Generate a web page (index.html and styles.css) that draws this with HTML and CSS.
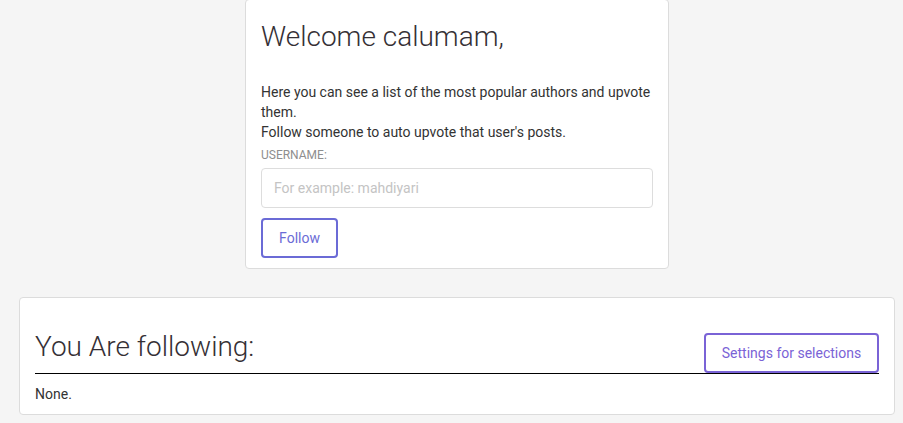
FILE: index.html
```html
<!DOCTYPE html>
<html lang="en">
<head>
  <meta charset="UTF-8">
  <meta name="viewport" content="width=device-width, initial-scale=1.0">
  <title>Upvote - Following</title>
  <link rel="stylesheet" href="styles.css">
</head>
<body>
  <div class="page">
    <div class="card welcome-card">
      <h1 class="card-title">Welcome calumam,</h1>
      <p class="intro">Here you can see a list of the most popular authors and upvote them.<br>Follow someone to auto upvote that user's posts.</p>
      <form class="follow-form" id="followForm">
        <label for="username">USERNAME:</label>
        <input type="text" id="username" placeholder="For example: mahdiyari">
        <button type="submit" class="btn btn-follow">Follow</button>
      </form>
    </div>
    <div class="card following-card">
      <div class="following-head">
        <h2 class="card-title">You Are following:</h2>
        <button class="btn btn-settings">Settings for selections</button>
      </div>
      <p class="following-list">None.</p>
    </div>
  </div>
</body>
</html>
```
FILE: styles.css
```css
body {
  font-family: Roboto, "Liberation Sans", Arial, sans-serif;
  margin: 0;
  padding: 0;
  background-color: #f5f5f5;
  color: #333;
}
.page {
  padding: 0 8px 0 19px;
  display: flex;
  flex-direction: column;
}
.card {
  background: white;
  border: 1px solid #dcdcdc;
  border-radius: 4px;
}
.welcome-card {
  width: 424px;
  box-sizing: border-box;
  margin: -1px auto 0;
  padding: 20px 15px 10px;
}
.card-title {
  font-size: 28px;
  font-weight: 300;
  line-height: 34px;
  color: #353035;
  margin: 0;
}
.intro {
  font-size: 14px;
  line-height: 20px;
  margin: 28px 0 0;
}
.follow-form {
  display: flex;
  flex-direction: column;
  align-items: flex-start;
}
label {
  font-size: 12px;
  line-height: 14px;
  color: #8e8e8e;
  margin-top: 6px;
}
input {
  width: 100%;
  box-sizing: border-box;
  height: 40px;
  margin-top: 6px;
  padding: 0 12px;
  font-family: inherit;
  font-size: 14px;
  border: 1px solid #ddd;
  border-radius: 4px;
}
input::placeholder {
  color: #c4c4c4;
}
.btn {
  height: 40px;
  box-sizing: border-box;
  background: white;
  border: 2px solid;
  border-radius: 4px;
  font-family: inherit;
  font-size: 14px;
  cursor: pointer;
}
.btn-follow {
  margin-top: 10px;
  width: 77px;
  color: #6b6bd6;
  border-color: #6b6bd6;
}
.following-card {
  margin-top: 28px;
  padding: 32px 15px 10px;
}
.following-head {
  display: flex;
  justify-content: space-between;
  align-items: flex-end;
  border-bottom: 1px solid #000;
}
.following-head .card-title {
  margin-bottom: 9px;
}
.btn-settings {
  width: 175px;
  color: #7a63d6;
  border-color: #7a63d6;
}
.following-list {
  font-size: 14px;
  line-height: 20px;
  margin: 10px 0 0;
}
```
